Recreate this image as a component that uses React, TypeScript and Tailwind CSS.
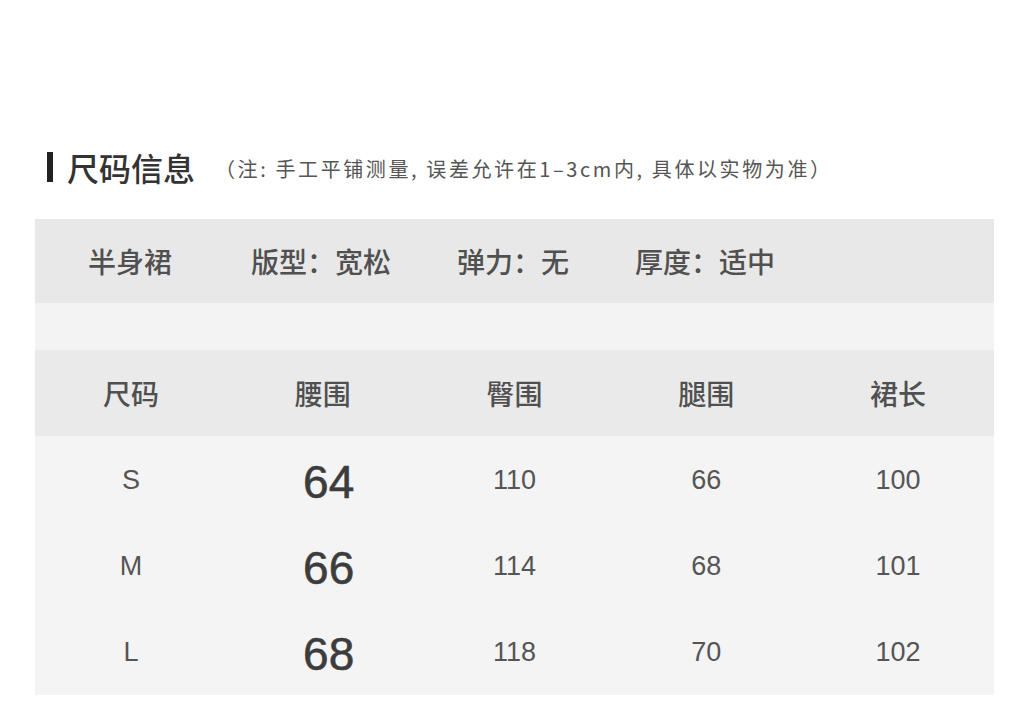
const cjk = "font-['Noto_Sans_CJK_SC','Noto_Sans',sans-serif]";
const num = "font-['Liberation_Sans','Noto_Sans_CJK_SC',sans-serif]";

const attrs = ["半身裙", "版型：宽松", "弹力：无", "厚度：适中"];
const heads = ["尺码", "腰围", "臀围", "腿围", "裙长"];
const rows = [
  ["S", "64", "110", "66", "100"],
  ["M", "66", "114", "68", "101"],
  ["L", "68", "118", "70", "102"],
];

export default function App() {
  return (
    <div className="w-[1024px] h-[705px] bg-white overflow-hidden">
      <div className="h-[149px]" />
      <div className="flex items-center h-[36px] pl-[47px]">
        <div className="w-[6px] h-[30px] bg-[#222]" />
        <span className={`${cjk} ml-[14px] text-[32px] leading-none text-[#333] font-medium`}>尺码信息</span>
        <span className={`${cjk} ml-[20px] text-[20px] tracking-[2.6px] leading-none text-[#555] mt-[4px]`}>
          （注: 手工平铺测量, 误差允许在1–3cm内, 具体以实物为准）
        </span>
      </div>
      <div className="h-[34px]" />
      <div className="ml-[35px] w-[959px]">
        <div className={`${cjk} h-[84px] bg-[#e8e8e8] flex items-center text-[28px] font-medium text-[#505050]`}>
          <span className="ml-[53px]">{attrs[0]}</span>
          <span className="ml-[79px]">{attrs[1]}</span>
          <span className="ml-[66px]">{attrs[2]}</span>
          <span className="ml-[66px]">{attrs[3]}</span>
        </div>
        <div className="h-[47px] bg-[#f3f3f3]" />
        <div className={`${cjk} h-[86px] bg-[#eaeaea] grid grid-cols-5 items-center text-[28px] font-medium text-[#505050]`}>
          {heads.map((h) => (
            <div key={h} className="text-center">{h}</div>
          ))}
        </div>
        <div className="bg-[#f4f4f4] pt-[1px]">
          {rows.map((r) => (
            <div key={r[0]} className={`${num} h-[86px] grid grid-cols-5 items-center text-[27px] text-[#555]`}>
              {r.map((c, i) => (
                <div
                  key={i}
                  className={i === 1 ? "text-center pl-[12px] text-[46px] text-[#3c3c3c] mt-[4px] [-webkit-text-stroke:0.6px_#3c3c3c]" : "text-center"}
                >
                  {c}
                </div>
              ))}
            </div>
          ))}
        </div>
      </div>
    </div>
  );
}
